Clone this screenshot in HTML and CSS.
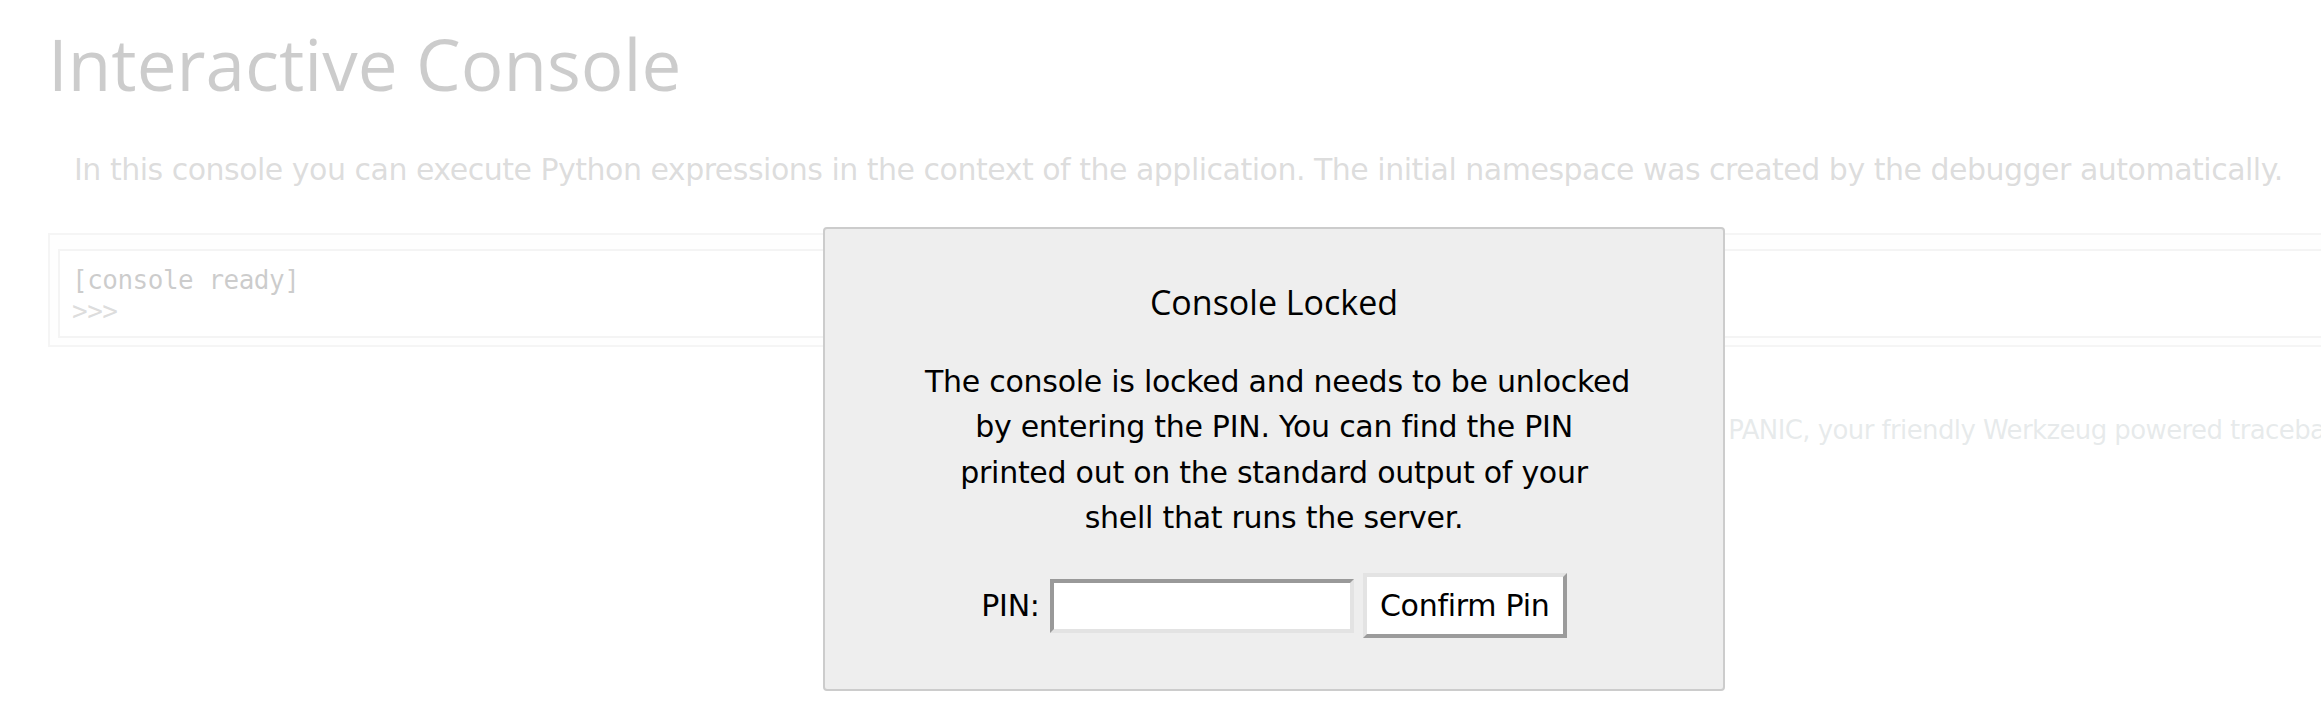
FILE: index.html
```html
<!DOCTYPE html>
<html lang="en">
<head>
<meta charset="utf-8">
<title>Console // Werkzeug Debugger</title>
<link rel="stylesheet" href="styles.css">
</head>
<body>
<div class="debugger">
  <h1 class="title">Interactive Console</h1>
  <div class="explanation">In this console you can execute Python expressions in the context of the application. The initial namespace was created by the debugger automatically.</div>
  <div class="console">
    <div class="inner">
      <div class="output">[console ready]</div>
      <div class="prompt">&gt;&gt;&gt;</div>
    </div>
  </div>
  <div class="footer">Brought to you by <strong class="arthur">DON'T PANIC</strong>, your friendly Werkzeug powered traceback interpreter.</div>
</div>
<div class="pin-prompt">
  <div class="pin-inner">
    <h3 class="pin-title">Console Locked</h3>
    <p class="pin-text">The console is locked and needs to be unlocked<br>by entering the PIN. You can find the PIN<br>printed out on the standard output of your<br>shell that runs the server.</p>
    <form class="pin-form">
      <span class="pin-label">PIN:</span>
      <input type="text" class="pin-input" name="pin" size="14">
      <input type="submit" class="pin-btn" name="btn" value="Confirm Pin">
    </form>
  </div>
</div>
</body>
</html>
```
FILE: styles.css
```css
html, body {
  margin: 0;
  padding: 0;
  overflow: hidden;
  background: #fff;
}
body {
  position: relative;
  width: 2548px;
  height: 719px;
  font-family: "DejaVu Sans", sans-serif;
  color: #000;
}
.debugger {
  padding: 22px 48px 0;
  text-align: left;
}
.title {
  margin: 0;
  font-family: "Open Sans", sans-serif;
  font-stretch: normal;
  font-weight: 400;
  font-size: 71px;
  line-height: 84px;
}
.explanation {
  margin: 44px 26px 0;
  font-size: 30px;
  line-height: 40px;
  letter-spacing: -0.5px;
  color: #555;
  white-space: nowrap;
}
.console {
  margin-top: 43px;
  border: 2px solid #ccc;
  background: #fafafa;
  padding: 14px 8px 7px;
}
.inner {
  background: #fff;
  border: 2px solid #c8c8c8;
  padding: 14px 12px 9px;
  font-family: "DejaVu Sans Mono", monospace;
  font-size: 26px;
  line-height: 31px;
  letter-spacing: -0.5px;
}
.prompt {
  color: #555;
}
.footer {
  margin-top: 68px;
  text-align: right;
  font-size: 26px;
  line-height: 30px;
  letter-spacing: -0.6px;
  color: #86989b;
  white-space: nowrap;
}
.arthur {
  font-weight: normal;
}
.pin-prompt {
  position: absolute;
  top: 0;
  left: 0;
  right: 0;
  bottom: 0;
  background: rgba(255, 255, 255, 0.8);
}
.pin-inner {
  box-sizing: border-box;
  width: 902px;
  margin: 227px auto 0;
  padding: 20px 100px;
  background: #eee;
  border: 2px solid #ccc;
  border-radius: 4px;
  text-align: center;
}
.pin-title {
  margin: 33px 0 0;
  font-family: "Open Sans", sans-serif;
  font-stretch: normal;
  font-weight: 400;
  font-size: 34px;
  line-height: 40px;
}
.pin-text {
  margin: 37px 0 0;
  font-size: 30px;
  line-height: 45.33px;
  letter-spacing: -0.27px;
  white-space: nowrap;
}
.pin-form {
  display: flex;
  justify-content: center;
  align-items: center;
  margin: 33px 0 31px;
  font-size: 30px;
  line-height: 35px;
  letter-spacing: -0.27px;
}
.pin-input {
  box-sizing: border-box;
  width: 304px;
  height: 54px;
  margin: 0 0 0 10px;
  padding: 0 6px;
  border: 4px solid;
  border-color: #999 #e3e3e3 #e3e3e3 #999;
  background: #fff;
  font: inherit;
  outline: none;
}
.pin-btn {
  box-sizing: border-box;
  width: 204px;
  height: 65px;
  margin: 0 0 0 9px;
  padding: 0;
  border: 4px solid;
  border-color: #e3e3e3 #9b9b9b #9b9b9b #e3e3e3;
  background: #fff;
  color: #000;
  font-family: "DejaVu Sans", sans-serif;
  font-size: 30px;
  letter-spacing: -0.27px;
}
```
